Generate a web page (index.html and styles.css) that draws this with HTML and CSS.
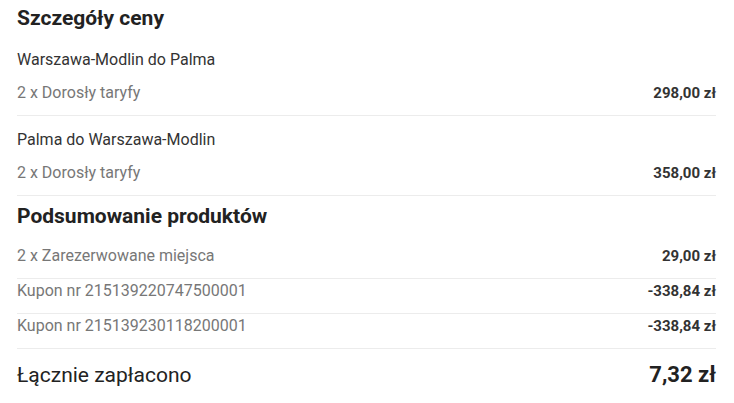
FILE: index.html
```html
<!DOCTYPE html>
<html lang="pl">
<head>
<meta charset="utf-8">
<title>Szczegóły ceny</title>
<link rel="stylesheet" href="styles.css">
</head>
<body>
<div class="panel">
  <h2 class="title">Szczegóły ceny</h2>
  <div class="leg first">
    <div class="route">Warszawa-Modlin do Palma</div>
    <div class="line fare"><span class="label">2 x Dorosły taryfy</span><span class="price">298,00 zł</span></div>
  </div>
  <div class="leg">
    <div class="route">Palma do Warszawa-Modlin</div>
    <div class="line fare"><span class="label">2 x Dorosły taryfy</span><span class="price">358,00 zł</span></div>
  </div>
  <h2 class="title sub">Podsumowanie produktów</h2>
  <div class="line item first-item"><span class="label">2 x Zarezerwowane miejsca</span><span class="price">29,00 zł</span></div>
  <div class="line item"><span class="label">Kupon nr 215139220747500001</span><span class="price">-338,84 zł</span></div>
  <div class="line item"><span class="label">Kupon nr 215139230118200001</span><span class="price">-338,84 zł</span></div>
  <div class="total"><span class="total-label">Łącznie zapłacono</span><span class="total-price">7,32 zł</span></div>
</div>
</body>
</html>
```

FILE: styles.css
```css
html, body {
  margin: 0;
  padding: 0;
  background: #ffffff;
}
body {
  font-family: Roboto, "Liberation Sans", Arial, sans-serif;
  color: #333333;
}
.panel {
  padding: 0 18px 0 17px;
}
.title {
  margin: 0;
  padding-top: 6px;
  font-size: 21px;
  line-height: 24px;
  font-weight: 700;
  color: #222222;
}
.title.sub {
  padding-top: 8px;
}
.leg {
  padding-top: 14px;
  padding-bottom: 12px;
  border-bottom: 1px solid #ececec;
}
.leg.first {
  padding-top: 20px;
}
.route {
  font-size: 16px;
  line-height: 20px;
  color: #333333;
}
.line {
  display: flex;
  justify-content: space-between;
  align-items: baseline;
  font-size: 16px;
  line-height: 20px;
}
.fare {
  margin-top: 13px;
}
.label {
  color: #777777;
}
.price {
  font-size: 15px;
  font-weight: 700;
  color: #333333;
}
.item {
  padding-top: 2px;
  padding-bottom: 12px;
  border-bottom: 1px solid #ececec;
}
.item.first-item {
  padding-top: 18px;
}
.total {
  display: flex;
  justify-content: space-between;
  align-items: baseline;
  padding-top: 12px;
}
.total-label {
  font-size: 21px;
  line-height: 28px;
  color: #222222;
}
.total-price {
  font-size: 22px;
  line-height: 28px;
  font-weight: 700;
  color: #222222;
}
```
